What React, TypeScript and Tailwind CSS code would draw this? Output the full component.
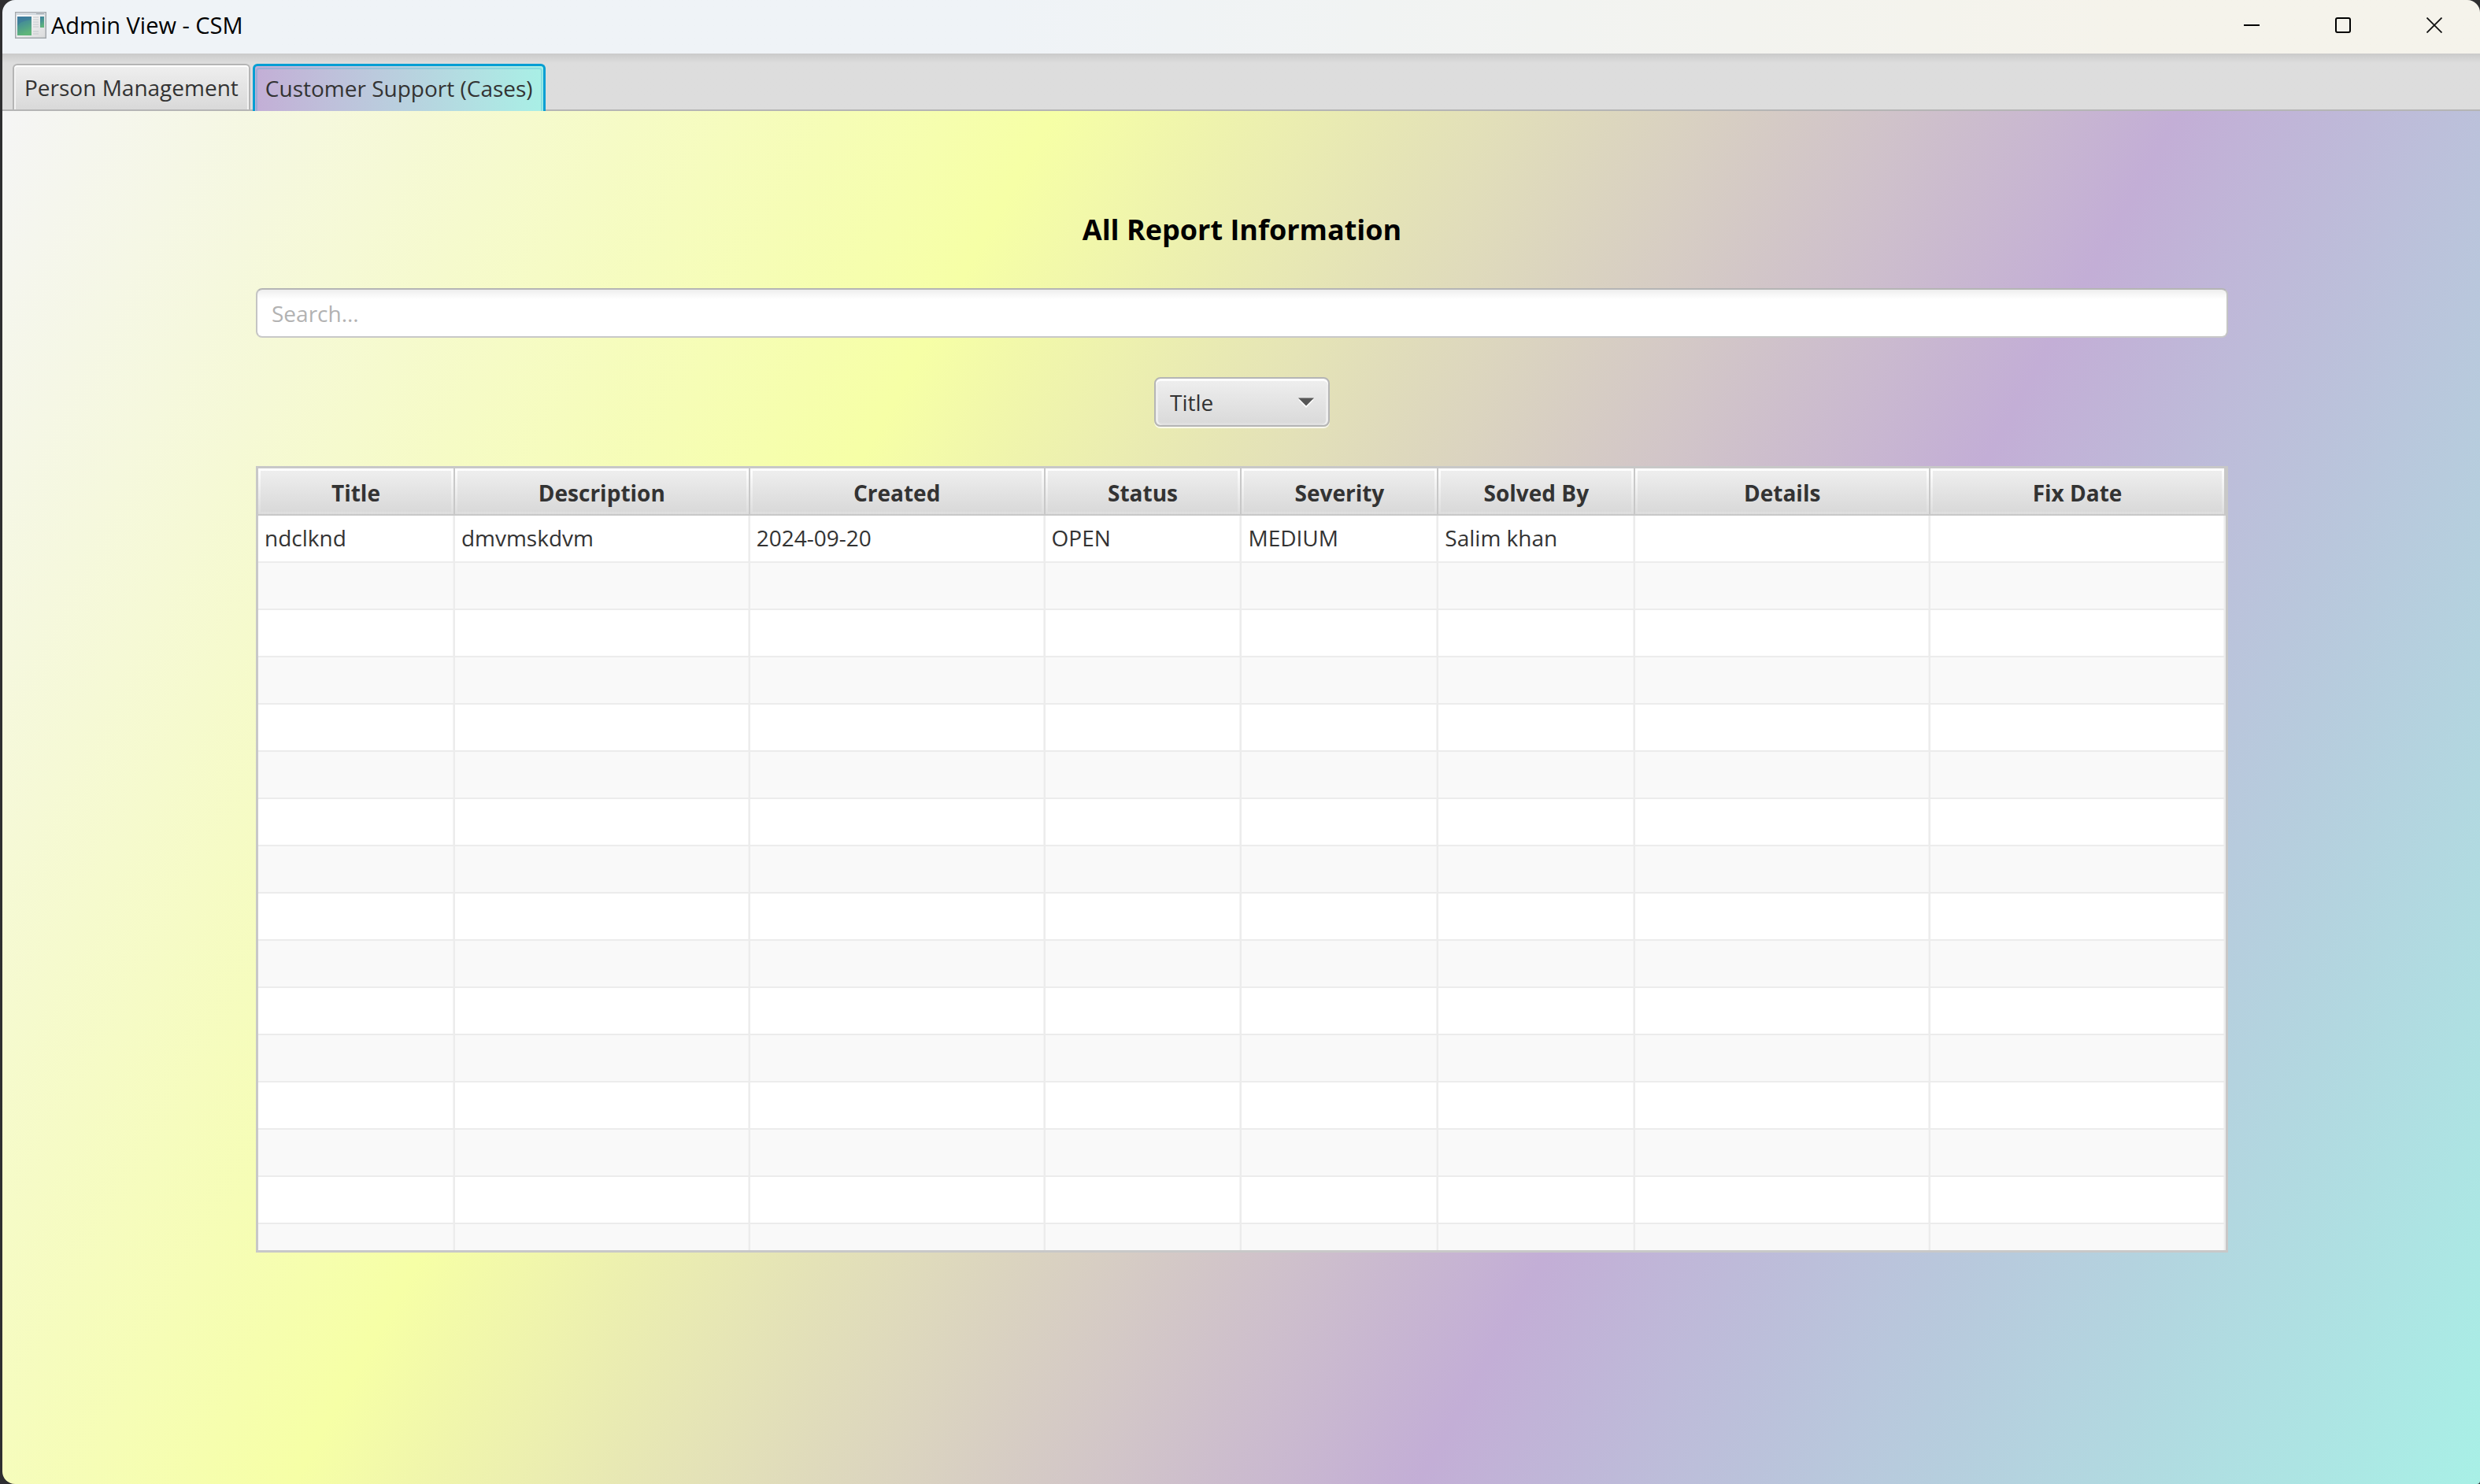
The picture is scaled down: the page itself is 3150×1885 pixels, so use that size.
import React from "react";

type Column = { label: string; width: string };

const columns: Column[] = [
  { label: "Title", width: "w-[10%]" },
  { label: "Description", width: "w-[15%]" },
  { label: "Created", width: "w-[15%]" },
  { label: "Status", width: "w-[10%]" },
  { label: "Severity", width: "w-[10%]" },
  { label: "Solved By", width: "w-[10%]" },
  { label: "Details", width: "w-[15%]" },
  { label: "Fix Date", width: "w-[15%]" },
];

const reports: string[][] = [
  ["ndclknd", "dmvmskdvm", "2024-09-20", "OPEN", "MEDIUM", "Salim khan", "", ""],
];

const FULL_ROWS = 15;

function AppIcon() {
  return (
    <svg width="40" height="34" viewBox="0 0 40 34" aria-hidden="true">
      <defs>
        <linearGradient id="pane" x1="0" y1="0" x2="0.3" y2="1">
          <stop offset="0" stopColor="#3d7f9e" />
          <stop offset="0.5" stopColor="#4a9690" />
          <stop offset="1" stopColor="#5fb57a" />
        </linearGradient>
        <linearGradient id="frame" x1="0" y1="0" x2="1" y2="1">
          <stop offset="0" stopColor="#ffffff" />
          <stop offset="1" stopColor="#d9dadb" />
        </linearGradient>
      </defs>
      <rect x="0.75" y="0.75" width="38.5" height="32.5" fill="url(#frame)" stroke="#a3a8ad" strokeWidth="1.5" />
      <rect x="1.5" y="1.5" width="37" height="2.5" fill="#d3dae0" />
      <path d="M27 2.5h10" stroke="#9aa2a9" strokeWidth="1" />
      <rect x="3" y="6" width="18" height="24" fill="url(#pane)" />
      <path d="M3 18C7 12 14 11 21 10V6H3Z" fill="#3b74a0" opacity="0.5" />
      <path d="M23 7h7M23 10h7M23 13h7M23 16h7M23 19h7M23 25h7M23 28h7" stroke="#c4c8cb" strokeWidth="1.2" />
      <rect x="32" y="6" width="5" height="14" fill="url(#pane)" />
    </svg>
  );
}

function TitleBar() {
  return (
    <header className="flex h-[68px] shrink-0 items-center justify-between bg-linear-to-r from-[#eff3f7] from-40% to-[#f5f3eb] to-85% pl-4">
      <div className="flex items-center gap-1.5 pb-1">
        <AppIcon />
        <span className="text-[29px] leading-9 text-black">Admin View - CSM</span>
      </div>
      <div className="flex h-full">
        <button type="button" aria-label="Minimize" className="flex h-16 w-[116px] items-center justify-center">
          <svg width="20" height="20" viewBox="0 0 20 20">
            <path d="M0 10h20" stroke="#000" strokeWidth="2" />
          </svg>
        </button>
        <button type="button" aria-label="Maximize" className="flex h-16 w-[116px] items-center justify-center">
          <svg width="20" height="20" viewBox="0 0 20 20">
            <rect x="1" y="1" width="18" height="18" rx="2" fill="none" stroke="#000" strokeWidth="2" />
          </svg>
        </button>
        <button type="button" aria-label="Close" className="flex h-16 w-[116px] items-center justify-center">
          <svg width="20" height="20" viewBox="0 0 20 20">
            <path d="M0.5 0.5l19 19M19.5 0.5l-19 19" stroke="#111" strokeWidth="1.8" />
          </svg>
        </button>
      </div>
    </header>
  );
}

function Tabs() {
  return (
    <div
      role="tablist"
      className="flex h-[73px] shrink-0 items-end gap-[3px] bg-linear-to-b from-[#cacaca] to-[#dddddd] to-[12px] pl-[13px] shadow-[inset_0_-2px_0_#b5b5b5]"
    >
      <button
        type="button"
        role="tab"
        aria-selected="false"
        className="mb-[2px] h-[58px] rounded-t-md border-2 border-b-0 border-[#b5b5b5] bg-linear-to-b from-[#efefef] to-[#d9d9d9] px-[13px] text-[28px] leading-9 text-[#333] shadow-[inset_0_2px_0_#fff,inset_2px_0_0_#f3f3f3,inset_-2px_0_0_#f3f3f3]"
      >
        Person Management
      </button>
      <button
        type="button"
        role="tab"
        aria-selected="true"
        className="relative h-[60px] rounded-t-md border-[3px] border-b-0 border-[#039ed3] bg-linear-to-r from-[#c3aed6] to-[#a8f0e6] bg-origin-border px-[13px] pb-0.5 text-[28px] leading-9 text-[#333] after:absolute after:inset-x-[1px] after:top-[2px] after:bottom-0 after:rounded-t-sm after:border-2 after:border-b-0 after:border-[#039ed3]/20"
      >
        Customer Support (Cases)
      </button>
    </div>
  );
}

function FilterSelect() {
  return (
    <div className="relative mx-auto mt-[50px] w-[223px]">
      <select
        aria-label="Search field"
        defaultValue="Title"
        className="block h-[63px] w-full appearance-none rounded-lg border-2 border-[#b5b5b5] bg-linear-to-b from-[#efefef] to-[#d9d9d9] px-[18px] text-[28px] leading-9 text-[#333] shadow-[inset_0_3px_0_#fcfcfc,inset_3px_0_0_#eeeeee,inset_-3px_0_0_#eeeeee,inset_0_-3px_0_#e0e0e0,0_2px_0_rgba(255,255,255,0.75)]"
      >
        {columns.map((c) => (
          <option key={c.label}>{c.label}</option>
        ))}
      </select>
      <svg className="pointer-events-none absolute top-[26px] right-5" width="20" height="13" viewBox="0 0 20 13">
        <path d="M0 2.5h20L10 13Z" fill="#fff" />
        <path d="M0 0.5h20L10 10.5Z" fill="#575757" />
      </svg>
    </div>
  );
}

function ReportTable() {
  const rows = Array.from({ length: FULL_ROWS + 1 }, (_, i) => reports[i] ?? columns.map(() => ""));
  return (
    <div className="mt-[50px] border-[3px] border-[#c8c8c8] bg-white">
      <table className="w-full table-fixed border-separate border-spacing-0 text-[28px] leading-9 text-[#333]">
        <thead>
          <tr>
            {columns.map((c) => (
              <th
                key={c.label}
                scope="col"
                className={`${c.width} h-[60px] border-r-2 border-b-2 border-[#c8c8c8] bg-linear-to-b from-white to-[#dddddd] p-[3px] font-bold`}
              >
                <div className="flex h-[52px] items-center justify-center bg-linear-to-b from-[#eeeeee] to-[#d9d9d9] pt-1">
                  {c.label}
                </div>
              </th>
            ))}
          </tr>
        </thead>
        <tbody>
          {rows.map((row, r) => (
            <tr key={r} className={`${r < FULL_ROWS ? "h-[60px]" : "h-[33px]"} ${r % 2 ? "bg-[#f9f9f9]" : "bg-white"}`}>
              {row.map((cell, c) => (
                <td
                  key={c}
                  className={`border-r-2 border-[#ececec] px-2 pt-0 pb-0.5 shadow-[inset_-1px_0_0_#f4f4f4] ${r < FULL_ROWS ? "border-b-2" : "h-[33px]"}`}
                >
                  {cell}
                </td>
              ))}
            </tr>
          ))}
        </tbody>
      </table>
    </div>
  );
}

export default function App() {
  return (
    <div className="flex min-h-screen bg-[#2e2e30] pl-[3px] font-['Open_Sans','Noto_Sans',sans-serif]">
      <div className="flex min-w-0 flex-1 flex-col overflow-hidden rounded-2xl rounded-br-sm">
        <TitleBar />
        <Tabs />
        <main className="flex-1 bg-[linear-gradient(119deg,#f5f5f5_0%,#f6ffa6_32.5%,#c3aed6_67.2%,#a8f0e6_100%)] pt-[124px] pr-8 pb-20 pl-[34px]">
          <div className="mx-auto w-full max-w-[2505px]">
            <h1 className="text-center text-[36px] leading-[53px] font-bold text-black">All Report Information</h1>
            <input
              type="search"
              aria-label="Search reports"
              placeholder="Search..."
              className="mt-12 block h-[63px] w-full appearance-none rounded-lg border-2 border-t-[#b5b5b5] border-r-[#c4c4c4] border-b-[#c8c8c8] border-l-[#c4c4c4] bg-linear-to-b from-[#eeeeee] to-white to-[12px] px-[18px] text-[28px] leading-9 text-[#333] placeholder:text-[#b2b2b2]"
            />
            <FilterSelect />
            <ReportTable />
          </div>
        </main>
      </div>
    </div>
  );
}
